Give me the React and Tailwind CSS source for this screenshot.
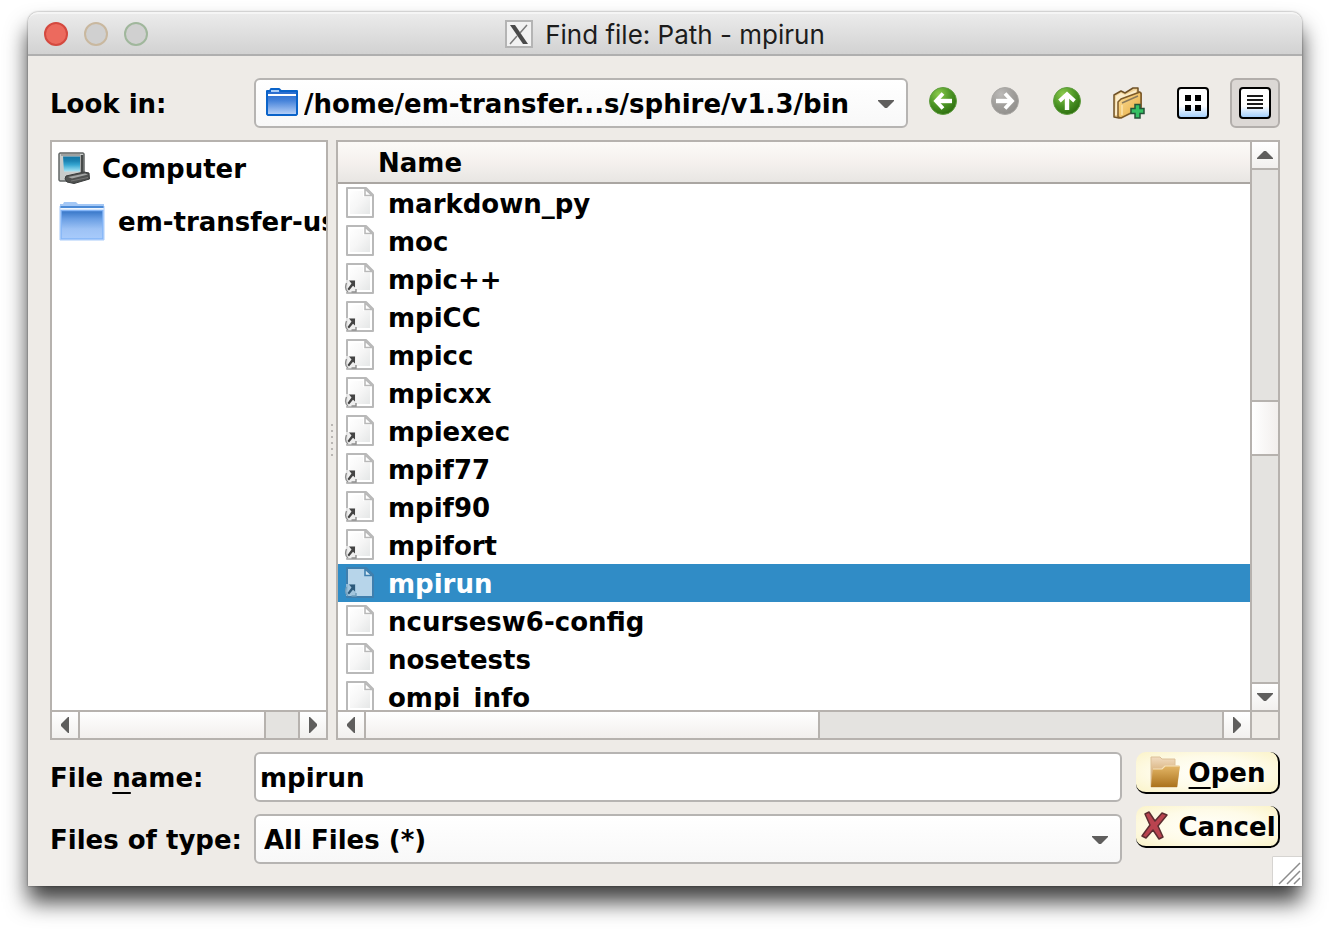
import React from "react";

const files = [
  { name: "markdown_py" },
  { name: "moc" },
  { name: "mpic++", link: true },
  { name: "mpiCC", link: true },
  { name: "mpicc", link: true },
  { name: "mpicxx", link: true },
  { name: "mpiexec", link: true },
  { name: "mpif77", link: true },
  { name: "mpif90", link: true },
  { name: "mpifort", link: true },
  { name: "mpirun", link: true, selected: true },
  { name: "ncursesw6-config" },
  { name: "nosetests" },
  { name: "ompi_info" },
];

function FileIcon({ link, selected }) {
  const line = selected ? "#3f7fae" : "#b9b9b9";
  return (
    <svg viewBox="0 0 30 32" className="h-8 w-[30px] shrink-0" aria-hidden="true">
      <defs>
        <linearGradient id="sheet" x1="0" y1="0" x2="1" y2="1">
          <stop offset="0" stopColor="#ffffff" />
          <stop offset="0.5" stopColor="#f6f6f6" />
          <stop offset="1" stopColor="#e5e7e7" />
        </linearGradient>
      </defs>
      <path d="M3 1H22L29 8V30H3Z" fill={selected ? "#b7d5ea" : "#ffffff"} stroke={line} strokeWidth="2" strokeLinejoin="round" />
      {!selected && <path d="M6 4H19V10H26V27H6Z" fill="url(#sheet)" />}
      <path d="M21 2V8.500H28Z" fill={selected ? "#d5e8f4" : "#ffffff"} stroke={line} strokeWidth="1.600" />
      {link && (
        <g>
          <path d="M2 17H12V29H2Z" fill={selected ? "#9fc2da" : "#ededed"} opacity="0.85" />
          <path d="M2.500 20C1 24 1 27 4 29M7.500 29H12V26" fill="none" stroke={selected ? "#6f9dbb" : "#8f8f8f"} strokeWidth="1.400" />
          <path d="M5 17.500H11V24.500L9 22.800L5 27.500L3.500 26L7.500 20.500Z" fill={selected ? "#2d5a7b" : "#444444"} />
        </g>
      )}
    </svg>
  );
}

function SmallFolderIcon({ className }) {
  return (
    <svg viewBox="0 0 32 28" className={className} aria-hidden="true">
      <defs>
        <linearGradient id="blueFolder" x1="0" y1="0" x2="0" y2="1">
          <stop offset="0.2" stopColor="#2e6fd0" />
          <stop offset="0.45" stopColor="#4683da" />
          <stop offset="1" stopColor="#bcd4f9" />
        </linearGradient>
      </defs>
      <path d="M1 3H4L5 1H13L15 3H31V26L30 27H2L1 26Z" fill="url(#blueFolder)" stroke="#0a63c9" strokeWidth="2" strokeLinejoin="round" />
      <path d="M5 2H13V4H5Z" fill="#a9ccf7" />
      <path d="M2 6H30V8H2Z" fill="#ffffff" />
    </svg>
  );
}

function LargeFolderIcon() {
  return (
    <svg viewBox="0 0 48 40" className="h-10 w-12 shrink-0" aria-hidden="true">
      <defs>
        <linearGradient id="paleFolder" x1="0" y1="0" x2="0" y2="1">
          <stop offset="0" stopColor="#3474c6" />
          <stop offset="0.3" stopColor="#6b9fe4" />
          <stop offset="0.65" stopColor="#9dc2f5" />
          <stop offset="1" stopColor="#a8cbfb" />
        </linearGradient>
      </defs>
      <path d="M2 3H5L6 1H18L20 3H46V6H2Z" fill="#a3c7f5" />
      <path d="M2 5H46V7H2Z" fill="#4b8ad6" />
      <path d="M3 7H45V9H3Z" fill="#eef5fd" />
      <path d="M3 9.500H45V38H3Z" fill="url(#paleFolder)" stroke="#83b5f7" strokeWidth="1.500" />
      <path d="M2 5V39H46V5" fill="none" stroke="#a9cbfa" strokeWidth="1" />
    </svg>
  );
}

function ComputerIcon() {
  return (
    <svg viewBox="0 0 32 32" className="h-8 w-8 shrink-0" aria-hidden="true">
      <defs>
        <linearGradient id="screen" x1="0" y1="0" x2="0" y2="1">
          <stop offset="0" stopColor="#1477a5" />
          <stop offset="0.3" stopColor="#1c84b3" />
          <stop offset="0.55" stopColor="#35a5d0" />
          <stop offset="1" stopColor="#a5e4f5" />
        </linearGradient>
      </defs>
      <path d="M2 1H25L26 2V24L9 29H2L1 28V2Z" fill="#c9cccb" stroke="#626665" strokeWidth="1.500" strokeLinejoin="round" />
      <path d="M24 3V20" stroke="#464a49" strokeWidth="2.500" />
      <path d="M5 4.500H22V19.500H6Z" fill="url(#screen)" />
      <path d="M3 3H22" stroke="#8f9392" strokeWidth="1.500" />
      <path d="M8 24L26 20L31 21L31.500 27L16 31.500L9 30L7 27Z" fill="#505251" stroke="#3a3c3c" strokeLinejoin="round" />
      <path d="M10 25L27 21.500L30 22.500L14 26.500Z" fill="#a4a6a5" />
      <path d="M13 29L30 25.500" stroke="#777777" strokeWidth="1" />
    </svg>
  );
}

function NavIcon({ direction, muted }) {
  const id = muted ? "navGrey" : "navGreen";
  const turn = { left: 0, right: 180, up: 90 }[direction];
  return (
    <svg viewBox="0 0 32 32" className="h-8 w-8" aria-hidden="true">
      <defs>
        <radialGradient id={id} cx="0.35" cy="0.25" r="0.8">
          <stop offset="0" stopColor={muted ? "#bcbab8" : "#8ccb4d"} />
          <stop offset="0.55" stopColor={muted ? "#a09e9b" : "#4b9425"} />
          <stop offset="1" stopColor={muted ? "#918f8c" : "#2c6c0d"} />
        </radialGradient>
      </defs>
      <circle cx="16" cy="14" r="13.500" fill={`url(#${id})`} stroke={muted ? "#a9a7a4" : "#5f9d3f"} strokeWidth="1" />
      <g transform={`rotate(${turn} 16 14)`} fill="none" stroke="#ffffff">
        <path d="M9 14H25" strokeWidth="4.400" />
        <path d="M16 6.500L9 14L16 21.500" strokeWidth="3.800" />
      </g>
    </svg>
  );
}

function NewFolderIcon() {
  return (
    <svg viewBox="0 0 32 32" className="h-8 w-8" aria-hidden="true">
      <defs>
        <linearGradient id="newFolder" x1="0" y1="0" x2="1" y2="1">
          <stop offset="0" stopColor="#fbdc98" />
          <stop offset="0.6" stopColor="#efbf62" />
          <stop offset="1" stopColor="#d9962e" />
        </linearGradient>
      </defs>
      <path d="M1 8L8 4L12 6L20 1L25 1V5L28 6V20L6 31L1 30Z" fill="#f0d296" stroke="#6f5127" strokeWidth="1.500" strokeLinejoin="round" />
      <path d="M3 9L8 6L12 8L23 3V6L7 13L4 28L2 28Z" fill="#fbeccb" />
      <path d="M5 30V15L8 12L27 5L28 7V21L8 31Z" fill="url(#newFolder)" stroke="#7d5a28" strokeWidth="1.500" strokeLinejoin="round" />
      <path d="M9 16L25 9" stroke="#8c7a5b" strokeWidth="1.500" />
      <path d="M9 18V28" stroke="#fbe3ac" strokeWidth="1.500" />
      <path d="M22 17.500H27V21.500H31V26.500H27V31H22V26.500H18V21.500H22Z" fill="#35c163" stroke="#24553a" strokeWidth="1.500" />
    </svg>
  );
}

function ViewIcon({ list }) {
  return (
    <svg viewBox="0 0 32 32" className="h-8 w-8" aria-hidden="true">
      <defs>
        <linearGradient id="viewFill" x1="0" y1="0" x2="0" y2="1">
          <stop offset="0" stopColor="#ffffff" />
          <stop offset="0.6" stopColor="#ffffff" />
          <stop offset="1" stopColor="#9ccbfb" />
        </linearGradient>
      </defs>
      <rect x="1" y="1" width="30" height="30" rx="3" fill="url(#viewFill)" stroke="#000000" strokeWidth="2" />
      {list ? (
        <path d="M8 9H24M8 13H24M8 17H24M8 21H24" stroke="#1a1a1a" strokeWidth="2" />
      ) : (
        <path d="M8 8H14V14H8ZM18 8H24V14H18ZM8 18H14V24H8ZM18 18H24V24H18Z" fill="#000000" />
      )}
    </svg>
  );
}

function OpenFolderIcon() {
  return (
    <svg viewBox="0 0 32 32" className="h-8 w-8 shrink-0" aria-hidden="true">
      <defs>
        <linearGradient id="openFront" x1="0" y1="0" x2="0" y2="1">
          <stop offset="0" stopColor="#e3b667" />
          <stop offset="1" stopColor="#ab721c" />
        </linearGradient>
        <linearGradient id="openBack" x1="0" y1="0" x2="0" y2="1">
          <stop offset="0" stopColor="#f1dcc0" />
          <stop offset="1" stopColor="#c0873a" />
        </linearGradient>
      </defs>
      <path d="M2 1H11L13 3H26V10H30L28 31H2Z" fill="url(#openBack)" stroke="#dcc097" strokeWidth="1" />
      <path d="M2 31L4 13H13L16 10H31L28 31Z" fill="url(#openFront)" />
      <path d="M4 13H13L16 10H31" fill="none" stroke="#f6e2b9" strokeWidth="1.200" />
    </svg>
  );
}

function CancelIcon() {
  return (
    <svg viewBox="0 0 32 32" className="h-8 w-8 shrink-0" aria-hidden="true">
      <path
        d="M7 4L11 2L17 11L24 3L29 5L20 16L25 27L21 29L15 20L8 28L4 26L12 15Z"
        fill="#b9434f"
        stroke="#5c2d31"
        strokeWidth="1.500"
        strokeLinejoin="round"
      />
    </svg>
  );
}

function XIcon() {
  return (
    <svg viewBox="0 0 28 28" className="h-7 w-7" aria-hidden="true">
      <rect x="1" y="1" width="26" height="26" fill="#f2f2f2" stroke="#b4b4b4" strokeWidth="2" />
      <path d="M5 5H10L23 24H18Z" fill="#4a4a4a" />
      <path d="M22 5L15 13M12 16L5 24" stroke="#7a7a7a" strokeWidth="1.500" />
    </svg>
  );
}

const arrows = {
  left: "M12 0V16H11L4 9V7L11 0Z",
  right: "M4 0V16H5L12 9V7L5 0Z",
  up: "M0 12V11L7 4H9L16 11V12Z",
  down: "M0 4V5L7 12H9L16 5V4Z",
};

function Arrow({ direction, className = "h-4 w-4" }) {
  return (
    <svg viewBox="0 0 16 16" className={className} aria-hidden="true">
      <path d={arrows[direction]} fill="#5f5e5d" />
    </svg>
  );
}

function ScrollButton({ direction, label, className }) {
  return (
    <button
      type="button"
      aria-label={label}
      className={`flex shrink-0 items-center justify-center border-[#b6b2ae] bg-linear-to-b from-white to-[#f2f0ee] ${className}`}
    >
      <Arrow direction={direction} />
    </button>
  );
}

function SelectBox({ id, value, icon, className, padding }) {
  return (
    <div className={`relative min-w-0 ${className}`}>
      {icon}
      <select
        id={id}
        defaultValue={value}
        className={`h-[50px] w-full appearance-none rounded-md border-2 border-[#b6b4b2] bg-linear-to-b from-white to-[#f8f8f8] pt-[2px] pr-12 ${padding}`}
      >
        <option>{value}</option>
      </select>
      <Arrow direction="down" className="pointer-events-none absolute top-[18px] right-[14px] h-4 w-4" />
    </div>
  );
}

const toolButton = "flex h-[50px] w-[50px] items-center justify-center rounded-md";
const fieldLabel = "w-[204px] shrink-0 pt-[2px] whitespace-nowrap";
const actionButton =
  "flex h-[42px] w-full items-center justify-center gap-2 rounded-[10px] border-r-2 border-b-2 border-black bg-[radial-gradient(ellipse_at_center,#fffffa_0%,#fefbe8_55%,#fbf3c8_100%)] whitespace-nowrap";
const mnemonic = "underline decoration-2 underline-offset-[5px]";

export default function App() {
  return (
    <div className="flex h-screen flex-col bg-white px-7 pt-3 pb-11 font-['DejaVu_Sans',sans-serif] text-[26px] leading-[38px] font-bold text-black">
      <main className="relative flex min-h-0 flex-1 flex-col rounded-t-[10px] bg-[#eeebe7] shadow-[0_0_2px_rgba(0,0,0,0.5),0_16px_22px_rgba(0,0,0,0.75)]">
        <header className="relative flex h-11 shrink-0 items-center justify-center gap-3 rounded-t-[10px] border-t-2 border-b-2 border-t-[#f5f5f5] border-b-[#afafaf] bg-linear-to-b from-[#ebebeb] to-[#d2d2d2]">
          <div className="absolute left-4 flex gap-4">
            <button type="button" aria-label="Close" className="h-6 w-6 rounded-full border-2 border-[#d4493f] bg-[#ec6a5e]" />
            <button type="button" aria-label="Minimize" className="h-6 w-6 rounded-full border-2 border-[#c9b89f] bg-[#d0d0d0]" />
            <button type="button" aria-label="Zoom" className="h-6 w-6 rounded-full border-2 border-[#a0b79c] bg-[#d0d0d0]" />
          </div>
          <XIcon />
          <h1 className="pt-[2px] font-[Inter,sans-serif] text-[26px] leading-9 font-normal text-[#1c1c1c]">Find file: Path - mpirun</h1>
        </header>

        <div className="flex min-h-0 flex-1 flex-col gap-3 p-[22px]">
          <div className="flex shrink-0 items-center">
            <label htmlFor="look-in" className={fieldLabel}>
              Look in:
            </label>
            <SelectBox
              id="look-in"
              value="/home/em-transfer...s/sphire/v1.3/bin"
              className="mr-[10px] flex-1"
              padding="pl-12"
              icon={<SmallFolderIcon className="pointer-events-none absolute top-[10px] left-3 h-7 w-8" />}
            />
            <div className="flex shrink-0 gap-[14px]">
              <div className="flex gap-3">
                <button type="button" aria-label="Back" className={toolButton}>
                  <NavIcon direction="left" />
                </button>
                <button type="button" aria-label="Forward" disabled className={toolButton}>
                  <NavIcon direction="right" muted />
                </button>
                <button type="button" aria-label="Parent Directory" className={toolButton}>
                  <NavIcon direction="up" />
                </button>
                <button type="button" aria-label="Create New Folder" className={toolButton}>
                  <NewFolderIcon />
                </button>
              </div>
              <div className="flex gap-3">
                <button type="button" aria-label="List View" className={toolButton}>
                  <ViewIcon />
                </button>
                <button type="button" aria-label="Detail View" aria-pressed="true" className={`${toolButton} border-2 border-[#b2aeab] bg-[#dcd8d5]`}>
                  <ViewIcon list />
                </button>
              </div>
            </div>
          </div>

          <div className="flex min-h-0 flex-1">
            <nav aria-label="Places" className="flex w-[278px] shrink-0 flex-col border-2 border-[#b6b2ae] bg-white">
              <ul className="min-h-0 flex-1 overflow-hidden whitespace-nowrap">
                <li className="flex h-[52px] items-center gap-3 pl-1.5">
                  <ComputerIcon />
                  <span className="pt-[2px]">Computer</span>
                </li>
                <li className="flex h-[54px] items-center gap-3 pl-1.5">
                  <LargeFolderIcon />
                  <span className="pt-[2px]">em-transfer-user</span>
                </li>
              </ul>
              <div className="flex h-7 shrink-0 border-t-2 border-[#b6b2ae] bg-[#e4e3e0]">
                <ScrollButton direction="left" label="Scroll places left" className="w-7 border-r-2" />
                <div className="flex-[184] border-r-2 border-[#b6b2ae] bg-linear-to-b from-white to-[#f2efed]" />
                <div className="flex-[32]" />
                <ScrollButton direction="right" label="Scroll places right" className="w-7 border-l-2" />
              </div>
            </nav>

            <div className="flex w-2 shrink-0 flex-col items-center justify-center gap-1" aria-hidden="true">
              {[0, 1, 2, 3, 4, 5].map((dot) => (
                <span key={dot} className="h-[2px] w-[2px] bg-[#b9b6b3]" />
              ))}
            </div>

            <section aria-label="Files" className="flex min-w-0 flex-1 flex-col border-2 border-[#b6b2ae] bg-white">
              <div className="flex min-h-0 flex-1">
                <div className="min-w-0 flex-1 overflow-hidden">
                  <table className="w-full border-separate border-spacing-0 text-left">
                    <thead>
                      <tr>
                        <th className="h-[42px] border-b-2 border-[#aaa6a2] bg-linear-to-b from-[#fcfaf7] via-[#f5f1ee] to-[#e8e6e3] p-0 pt-[2px] pl-10">Name</th>
                      </tr>
                    </thead>
                    <tbody>
                      {files.map((file) => (
                        <tr key={file.name} aria-selected={!!file.selected} className={file.selected ? "bg-[#308cc6] text-white" : ""}>
                          <td className="p-0">
                            <div className="flex h-[38px] items-center gap-[14px] pl-1.5">
                              <FileIcon link={file.link} selected={file.selected} />
                              <span className="pt-[2px]">{file.name}</span>
                            </div>
                          </td>
                        </tr>
                      ))}
                    </tbody>
                  </table>
                </div>
                <div className="flex w-7 shrink-0 flex-col border-l-2 border-[#b6b2ae] bg-[#e4e3e0]">
                  <ScrollButton direction="up" label="Scroll up" className="h-7 border-b-2" />
                  <div className="flex-[230]" />
                  <div className="flex-[52] border-y-2 border-[#b6b2ae] bg-linear-to-r from-white to-[#f2efed]" />
                  <div className="flex-[226]" />
                  <ScrollButton direction="down" label="Scroll down" className="h-7 border-t-2" />
                </div>
              </div>
              <div className="flex h-7 shrink-0 border-t-2 border-[#b6b2ae] bg-[#e4e3e0]">
                <ScrollButton direction="left" label="Scroll files left" className="w-7 border-r-2" />
                <div className="flex-[452] border-r-2 border-[#b6b2ae] bg-linear-to-b from-white to-[#f2efed]" />
                <div className="flex-[402]" />
                <ScrollButton direction="right" label="Scroll files right" className="w-7 border-l-2" />
                <div className="w-7 shrink-0 border-l-2 border-[#b6b2ae] bg-[#eeebe7]" />
              </div>
            </section>
          </div>

          <form className="flex shrink-0 gap-[14px]" onSubmit={(event) => event.preventDefault()}>
            <div className="flex min-w-0 flex-1 flex-col gap-3">
              <div className="flex items-center">
                <label htmlFor="file-name" className={fieldLabel}>
                  File <span className={mnemonic}>n</span>ame:
                </label>
                <input
                  id="file-name"
                  type="text"
                  defaultValue="mpirun"
                  className="h-[50px] min-w-0 flex-1 rounded-md border-2 border-[#b6b4b2] bg-white px-1 pt-[2px]"
                />
              </div>
              <div className="flex items-center">
                <label htmlFor="file-type" className={fieldLabel}>
                  Files of type:
                </label>
                <SelectBox id="file-type" value="All Files (*)" className="flex-1" padding="pl-2" />
              </div>
            </div>
            <div className="flex w-36 shrink-0 flex-col gap-3">
              <button type="submit" className={actionButton}>
                <OpenFolderIcon />
                <span className="pt-[2px]">
                  <span className={mnemonic}>O</span>pen
                </span>
              </button>
              <button type="button" className={actionButton}>
                <CancelIcon />
                <span className="pt-[2px]">Cancel</span>
              </button>
            </div>
          </form>
        </div>

        <svg viewBox="0 0 30 30" className="absolute right-0 bottom-0 h-[30px] w-[30px]" aria-hidden="true">
          <rect width="30" height="30" fill="#ffffff" />
          <path d="M0.500 30V0.500H30" fill="none" stroke="#d6d4d1" />
          <path d="M7 28L28 7M15 28L28 15M22 28L28 22" stroke="#8c8c8c" strokeWidth="1.500" />
        </svg>
      </main>
    </div>
  );
}
